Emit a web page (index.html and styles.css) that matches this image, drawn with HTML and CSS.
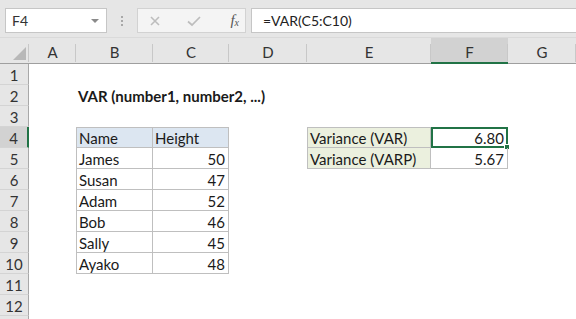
FILE: index.html
```html
<!DOCTYPE html>
<html>
<head>
<meta charset="utf-8">
<link rel="stylesheet" href="styles.css">
</head>
<body>
<div class="app">
  <div class="toolbar">
    <div class="namebox">
      <span class="nb-text">F4</span>
      <span class="nb-arrow"></span>
    </div>
    <div class="grip"><i></i><i></i><i></i></div>
    <div class="fbtns">
      <svg class="ico" width="14" height="14" viewBox="0 0 14 14"><path d="M3 3 L11 11 M11 3 L3 11" stroke="#bdbdbd" stroke-width="1.6" fill="none"/></svg>
      <svg class="ico" width="16" height="14" viewBox="0 0 16 14"><path d="M2 7.5 L6 11 L14 3" stroke="#bdbdbd" stroke-width="1.7" fill="none"/></svg>
      <span class="fx">f<sub>x</sub></span>
    </div>
    <div class="finput">=VAR(C5:C10)</div>
  </div>
  <div class="sheet">
    <div class="ch corner"><span class="tri"></span></div>
    <div class="ch">A</div>
    <div class="ch">B</div>
    <div class="ch">C</div>
    <div class="ch">D</div>
    <div class="ch">E</div>
    <div class="ch sel">F</div>
    <div class="ch">G</div>

    <div class="rh">1</div><div></div><div></div><div></div><div></div><div></div><div></div><div></div>

    <div class="rh">2</div><div></div><div class="c title">VAR (number1, number2, ...)</div><div></div><div></div><div></div><div></div><div></div>

    <div class="rh">3</div><div></div><div></div><div></div><div></div><div></div><div></div><div></div>

    <div class="rh rsel">4</div><div></div><div class="c t hd top left">Name</div><div class="c t hd top">Height</div><div></div><div class="c t lab top left">Variance (VAR)</div><div class="c t num top active">6.80<span class="handle"></span></div><div></div>

    <div class="rh">5</div><div></div><div class="c t left">James</div><div class="c t num">50</div><div></div><div class="c t lab left">Variance (VARP)</div><div class="c t num">5.67</div><div></div>

    <div class="rh">6</div><div></div><div class="c t left">Susan</div><div class="c t num">47</div><div></div><div></div><div></div><div></div>

    <div class="rh">7</div><div></div><div class="c t left">Adam</div><div class="c t num">52</div><div></div><div></div><div></div><div></div>

    <div class="rh">8</div><div></div><div class="c t left">Bob</div><div class="c t num">46</div><div></div><div></div><div></div><div></div>

    <div class="rh">9</div><div></div><div class="c t left">Sally</div><div class="c t num">45</div><div></div><div></div><div></div><div></div>

    <div class="rh">10</div><div></div><div class="c t left">Ayako</div><div class="c t num">48</div><div></div><div></div><div></div><div></div>

    <div class="rh">11</div><div></div><div></div><div></div><div></div><div></div><div></div><div></div>

    <div class="rh">12</div><div></div><div></div><div></div><div></div><div></div><div></div><div></div>

    <div class="rh"></div><div></div><div></div><div></div><div></div><div></div><div></div><div></div>
  </div>
</div>
</body>
</html>
```

FILE: styles.css
```css
* { box-sizing: border-box; }
html, body { margin: 0; padding: 0; }
body {
  width: 576px;
  height: 319px;
  overflow: hidden;
  background: #ffffff;
  font-family: Lato, "Open Sans", sans-serif;
  color: #1a1a1a;
}
.app { width: 576px; height: 319px; overflow: hidden; }

.toolbar {
  height: 38px;
  background: #e6e6e6;
  display: flex;
  align-items: flex-start;
  padding: 8px 0 0 5px;
  border-bottom: 1px solid #dadada;
}
.namebox {
  width: 102px;
  height: 25px;
  background: #ffffff;
  border: 1px solid #c6c6c6;
  display: flex;
  align-items: center;
  justify-content: space-between;
  padding: 0 6px 0 6px;
  font-size: 14px;
  color: #333;
}
.nb-arrow {
  width: 0; height: 0;
  border-left: 4px solid transparent;
  border-right: 4px solid transparent;
  border-top: 4px solid #8a8a8a;
  margin-right: 1px;
}
.grip {
  width: 30px;
  height: 25px;
  display: flex;
  flex-direction: column;
  align-items: center;
  justify-content: center;
  gap: 2px;
}
.grip i { display: block; width: 2px; height: 2px; background: #a8a8a8; }
.fbtns {
  width: 109px;
  height: 25px;
  background: #f4f4f4;
  border: 1px solid #d2d2d2;
  display: flex;
  align-items: center;
  padding: 0 6px 0 10px;
  gap: 19px;
}
.fbtns .ico:nth-child(2) { margin-left: 5px; }
.fx {
  margin-left: auto;
  font-family: "Liberation Serif", serif;
  font-style: italic;
  font-size: 15px;
  color: #555;
  line-height: 1;
}
.fx sub { font-size: 10px; vertical-align: -1px; }
.finput {
  margin-left: 5px;
  flex: 1;
  height: 25px;
  background: #ffffff;
  border: 1px solid #c6c6c6;
  border-right: none;
  font-size: 14px;
  color: #222;
  display: flex;
  align-items: center;
  padding-left: 11px;
}

.sheet {
  display: grid;
  grid-template-columns: 29px 47px 77px 76px 78px 124px 77px 68px;
  grid-template-rows: 26px;
  grid-auto-rows: 21px;
  background: #ffffff;
}
.ch {
  background: #e6e6e6;
  border-bottom: 1px solid #9f9f9f;
  display: flex;
  align-items: center;
  justify-content: center;
  font-size: 15px;
  color: #333;
  position: relative;
  padding-top: 3px;
}
.ch::after {
  content: "";
  position: absolute;
  right: 0;
  top: 6px;
  bottom: 1px;
  width: 1px;
  background: #c8c8c8;
}
.ch.sel {
  background: #d2d2d2;
  border-bottom: 2px solid #217346;
  padding-top: 4px;
}
.corner { justify-content: flex-end; align-items: flex-end; padding: 0 3px 3px 0; }
.tri {
  width: 0; height: 0;
  border-left: 13px solid transparent;
  border-bottom: 13px solid #b8b8b8;
}
.rh {
  background: #e6e6e6;
  border-right: 1px solid #a8a8a8;
  border-bottom: 1px solid #d4d4d4;
  display: flex;
  align-items: center;
  justify-content: center;
  font-size: 15px;
  color: #333;
  padding-top: 1px;
}
.rh.rsel {
  background: #d2d2d2;
  border-right: 2px solid #217346;
}

.c {
  font-size: 15px;
  display: flex;
  align-items: center;
  padding: 1px 3px 0 2px;
  white-space: nowrap;
  color: #1a1a1a;
  position: relative;
}
.title { font-weight: 700; overflow: visible; }
.t { border-right: 1px solid #bfbfbf; border-bottom: 1px solid #bfbfbf; }
.top { border-top: 1px solid #bfbfbf; }
.left { border-left: 1px solid #bfbfbf; }
.hd { background: #dce6f1; }
.lab { background: #ebf0de; }
.num { justify-content: flex-end; }
.active {
  border: 2px solid #217346;
  padding-right: 2px;
}
.handle {
  position: absolute;
  right: -4px;
  bottom: -4px;
  width: 6px;
  height: 6px;
  background: #217346;
  border: 1px solid #ffffff;
}
```
